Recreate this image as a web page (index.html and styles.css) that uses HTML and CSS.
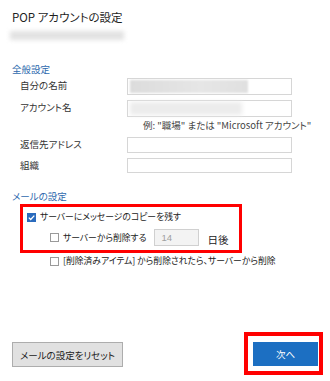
FILE: index.html
```html
<!DOCTYPE html>
<html>

<head>
  <meta charset="utf-8" />
  <title>POP アカウントの設定</title>
  <link rel="stylesheet" href="styles.css">
</head>

<body>
  <div class="page">
    <h1>POP アカウントの設定</h1>
    <div class="blur-line"></div>

    <div class="section-title general">全般設定</div>
    <div class="form-grid">
      <label>自分の名前</label>
      <div class="field"><span class="blur-text wide"></span></div>

      <label>アカウント名</label>
      <div class="field"><span class="blur-text light"></span></div>

      <div></div>
      <div class="hint">例: "職場" または "Microsoft アカウント"</div>

      <label>返信先アドレス</label>
      <div class="field"></div>

      <label>組織</label>
      <div class="field"></div>
    </div>

    <div class="section-title mail">メールの設定</div>
    <div class="highlight">
      <div class="check-row">
        <span class="box checked">
          <svg width="9" height="9" viewBox="0 0 9 9"><path d="M1.8 4.6 L3.7 6.5 L7.3 2.6" fill="none" stroke="#fff" stroke-width="1.3"/></svg>
        </span>
        <span>サーバーにメッセージのコピーを残す</span>
      </div>
      <div class="check-row sub">
        <span class="box"></span>
        <span>サーバーから削除する</span>
        <div class="days">14</div>
        <span class="days-label">日後</span>
      </div>
    </div>
    <div class="check-row sub outside">
      <span class="box"></span>
      <span>[削除済みアイテム] から削除されたら、サーバーから削除</span>
    </div>

    <div class="footer">
      <button class="reset">メールの設定をリセット</button>
      <div class="next-wrap">
        <button class="next">次へ</button>
      </div>
    </div>
  </div>
</body>

</html>
```

FILE: styles.css
```css
body {
  margin: 0;
  padding: 0;
  background: #ffffff;
  color: #222;
  font-family: "Noto Sans CJK JP", "Liberation Sans", sans-serif;
  font-size: 9.5px;
  font-feature-settings: "palt";
}

.page {
  width: 330px;
  height: 381px;
  box-sizing: border-box;
  padding: 9px 0 6px 12px;
  display: flex;
  flex-direction: column;
}

h1 {
  margin: 0;
  font-size: 11.5px;
  font-weight: normal;
  line-height: 17px;
  color: #1f1f1f;
}

.blur-line {
  width: 114px;
  height: 9px;
  margin: 5px 0 0 -2px;
  background: #e2e2e2;
  filter: blur(2px);
}

.section-title {
  color: #2e6aae;
  line-height: 12px;
}

.general {
  margin-top: 23px;
}

.form-grid {
  display: grid;
  grid-template-columns: 107px 165px;
  grid-template-rows: 17px 17px 10px 16px 15px;
  row-gap: 5px;
  margin-top: 3px;
  margin-left: 8px;
  align-items: center;
}

.form-grid label {
  color: #333;
  align-self: start;
  line-height: 14px;
}

.field {
  height: 100%;
  box-sizing: border-box;
  border: 1px solid #d6d6d6;
  background: #fff;
  display: flex;
  align-items: center;
  padding-left: 2px;
}

.blur-text {
  display: block;
  height: 13px;
  background: linear-gradient(90deg, #dcdcdc, #e6e6e6 60%, #e0e0e0);
  filter: blur(1px);
}

.blur-text.wide {
  width: 118px;
}

.blur-text.light {
  width: 112px;
  background: #ececec;
  filter: blur(2px);
}

.hint {
  align-self: start;
  margin-top: -3px;
  padding-left: 16px;
  color: #444;
  white-space: nowrap;
  line-height: 12px;
}

.mail {
  margin-top: 17px;
}

.highlight {
  width: 212px;
  height: 39px;
  margin: 2px 0 0 8px;
  border: 3px solid #ff0000;
  padding: 4px 0 0 4px;
}

.check-row {
  display: flex;
  align-items: center;
  gap: 4px;
  line-height: 12px;
  white-space: nowrap;
  font-size: 8.8px;
}

.check-row.sub {
  margin-left: 23px;
}

.highlight .check-row.sub {
  margin-top: 6px;
}

.check-row.outside {
  margin-left: 38px;
  margin-top: 2px;
}

.box {
  width: 9px;
  height: 9px;
  box-sizing: border-box;
  border: 1px solid #9a9a9a;
  background: #fff;
  flex-shrink: 0;
  display: flex;
}

.box.checked {
  border: none;
  background: #2a6bbd;
}

.days {
  width: 45px;
  height: 17px;
  box-sizing: border-box;
  margin-left: 4px;
  border: 1px solid #d0d0d0;
  background: #f3f3f3;
  color: #a0a0a0;
  font-family: "Liberation Sans", sans-serif;
  font-size: 9.5px;
  line-height: 15px;
  padding-left: 6px;
}

.days-label {
  margin-left: 4px;
  margin-top: 4px;
  font-size: 10.5px;
}

.footer {
  margin-top: auto;
  display: flex;
  justify-content: space-between;
  align-items: flex-end;
}

button {
  font-family: "Noto Sans CJK JP", "Liberation Sans", sans-serif;
  font-size: 9.5px;
  font-feature-settings: "palt";
  cursor: pointer;
}

.reset {
  width: 111px;
  height: 25px;
  margin-bottom: 8px;
  background: #e1e1e1;
  border: 1px solid #adadad;
  color: #222;
  padding: 0;
}

.next-wrap {
  border: 4px solid #ff0000;
  padding: 6px 1px 5px 5px;
  margin-right: 7px;
}

.next {
  display: block;
  width: 65px;
  height: 24px;
  background: #1c6fc2;
  border: 1px solid #1c6fc2;
  color: #fff;
  padding: 0;
}
```
